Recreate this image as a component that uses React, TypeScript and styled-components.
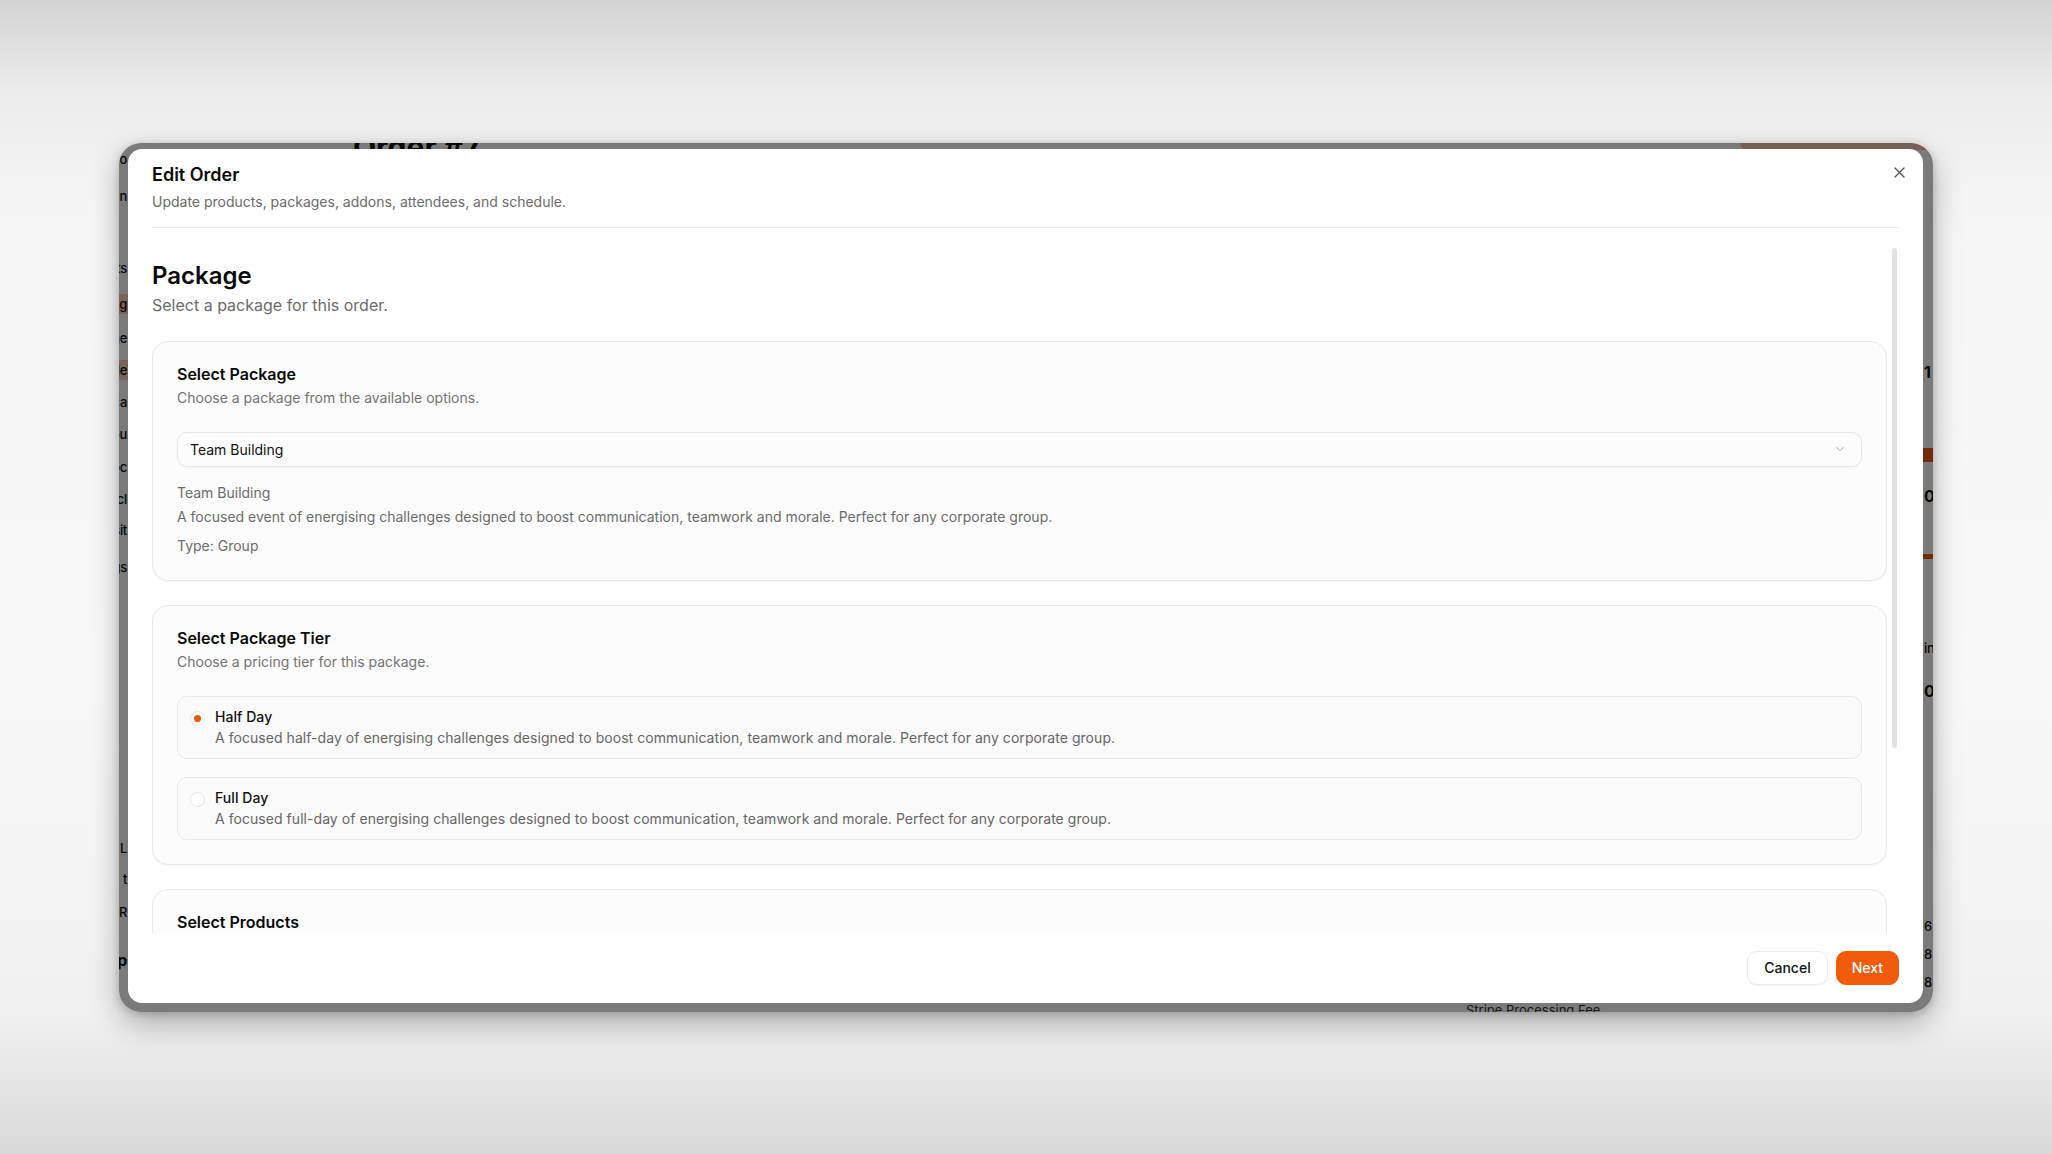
import styled, { createGlobalStyle } from 'styled-components'
import { ChevronDown } from 'lucide-react'

const GlobalStyle = createGlobalStyle`
  * {
    box-sizing: border-box;
  }
  html, body {
    margin: 0;
    padding: 0;
  }
  body {
    font-family: Inter, 'Noto Sans', sans-serif;
    color: #0a0a0a;
    -webkit-font-smoothing: antialiased;
  }
  p {
    margin: 0;
  }
`

const Page = styled.div`
  width: 100vw;
  height: 100vh;
  display: flex;
  align-items: center;
  justify-content: center;
  background:
    linear-gradient(to bottom, #d3d3d3 0%, #ececec 8%, #f6f6f6 20%, #f8f8f8 60%, #f0f0f0 88%, #d9d9d9 100%);
`

const Window = styled.div`
  position: relative;
  width: 1814px;
  height: 869px;
  border-radius: 22px;
  overflow: hidden;
  background: #fff;
  box-shadow: 0 12px 30px rgba(0, 0, 0, 0.28), 0 2px 8px rgba(0, 0, 0, 0.18);
`

/* the app page that sits behind the dialog */
const AppBehind = styled.div`
  height: 100%;
  display: flex;
  flex-direction: column;
  font-size: 14px;
  line-height: 20px;
  color: #111;
`

const AppHeader = styled.div`
  height: 6px;
  display: flex;
  justify-content: space-between;
  align-items: flex-start;
`

const OrderTitle = styled.h1`
  margin: -14px 0 0 234px;
  font-size: 30px;
  line-height: 36px;
  font-weight: 700;
  white-space: nowrap;
`

const EditButton = styled.div`
  width: 193px;
  height: 36px;
  margin-top: -29px;
  background: #fdc9b5;
  border-radius: 8px;
`

const AppBody = styled.div`
  flex: 1;
  display: flex;
`

const Rail = styled.div<{ $side: 'left' | 'right' }>`
  width: ${(p) => (p.$side === 'left' ? '9px' : '10px')};
  overflow: hidden;
  display: flex;
  flex-direction: column;
  align-items: ${(p) => (p.$side === 'left' ? 'flex-end' : 'flex-start')};
`

const RailItem = styled.div<{ $top: number; $hl?: boolean; $bold?: boolean }>`
  flex-shrink: 0;
  margin-top: ${(p) => p.$top}px;
  white-space: nowrap;
  font-weight: ${(p) => (p.$bold ? 700 : 500)};
  font-size: ${(p) => (p.$bold ? '16px' : '13px')};
  letter-spacing: -0.3px;
  background: ${(p) => (p.$hl ? '#fdd2bd' : 'transparent')};
  padding: 0 1px;
`

const RailBar = styled.div<{ $top: number; $h: number }>`
  flex-shrink: 0;
  margin-top: ${(p) => p.$top}px;
  width: 12px;
  height: ${(p) => p.$h}px;
  background: #f25a0c;
`

const AppMain = styled.div`
  flex: 1;
  display: flex;
  flex-direction: column;
  justify-content: flex-end;
`

const FeeLabel = styled.div`
  margin: 0 0 -8px 1338px;
  font-size: 13px;
  color: #333;
`

const Overlay = styled.div`
  position: absolute;
  inset: 0;
  background: rgba(0, 0, 0, 0.52);
`

const Dialog = styled.div`
  position: absolute;
  top: 6px;
  left: 9px;
  right: 10px;
  bottom: 9px;
  background: #fff;
  border-radius: 14px;
  display: flex;
  flex-direction: column;
  overflow: hidden;
`

const DialogHeader = styled.div`
  position: relative;
  margin: 0 24px;
  padding: 17px 0 15px;
  border-bottom: 1px solid #ededed;
`

const DialogTitle = styled.h2`
  margin: 0;
  font-size: 18px;
  line-height: 18px;
  font-weight: 600;
  color: #0a0a0a;
`

const DialogDescription = styled.p`
  margin-top: 8px;
  font-size: 14px;
  line-height: 20px;
  color: #6b6b6b;
`

const CloseButton = styled.button`
  position: absolute;
  top: 14px;
  right: -10px;
  width: 20px;
  height: 20px;
  padding: 0;
  border: none;
  background: transparent;
  display: flex;
  align-items: center;
  justify-content: center;
  color: #555;
  cursor: pointer;
`

const ScrollFrame = styled.div`
  flex: 1;
  min-height: 0;
  margin: 20px 24px 0;
  display: flex;
  gap: 5px;
`

const ScrollArea = styled.div`
  flex: 1;
  min-width: 0;
  overflow-y: auto;
  padding-top: 12px;
  scrollbar-width: none;

  &::-webkit-scrollbar {
    display: none;
  }
`

const ScrollTrack = styled.div`
  width: 7px;
  flex-shrink: 0;
`

const ScrollThumb = styled.div`
  width: 5px;
  height: 500px;
  border-radius: 3px;
  background: #e3e3e3;
`

const SectionTitle = styled.h3`
  margin: 0;
  font-size: 24px;
  line-height: 32px;
  font-weight: 600;
  color: #0a0a0a;
`

const SectionSubtitle = styled.p`
  margin-top: 1px;
  font-size: 16px;
  line-height: 24px;
  color: #6b6b6b;
`

const Card = styled.section`
  margin-top: 24px;
  padding: 20px 24px 24px;
  background: #fcfcfc;
  border: 1px solid #e8e8e8;
  border-radius: 16px;
  box-shadow: 0 1px 2px rgba(0, 0, 0, 0.04);
`

const CardTitle = styled.h4`
  margin: 0;
  font-size: 16px;
  line-height: 24px;
  font-weight: 600;
  color: #0a0a0a;
`

const CardDescription = styled.p`
  margin-top: 2px;
  font-size: 14px;
  line-height: 20px;
  color: #737373;
`

const SelectBox = styled.div`
  margin-top: 24px;
  height: 35px;
  padding: 0 14px 0 12px;
  display: flex;
  align-items: center;
  justify-content: space-between;
  background: #fcfcfc;
  border: 1px solid #e6e6e6;
  border-radius: 10px;
  font-size: 14px;
  color: #111;
  box-shadow: 0 1px 2px rgba(0, 0, 0, 0.03);
`

const Details = styled.div`
  margin-top: 16px;
  display: flex;
  flex-direction: column;
  font-size: 14px;
  line-height: 20px;
  color: #6b6b6b;
`

const DetailLine = styled.p<{ $gap: number }>`
  margin-top: ${(p) => p.$gap}px;
`

const TierList = styled.div`
  margin-top: 24px;
  display: flex;
  flex-direction: column;
  gap: 18px;
`

const TierOption = styled.label`
  display: flex;
  align-items: flex-start;
  gap: 10px;
  padding: 10px 12px 10px;
  background: #fafafa;
  border: 1px solid #e8e8e8;
  border-radius: 10px;
  cursor: pointer;
`

const Radio = styled.span<{ $checked: boolean }>`
  flex-shrink: 0;
  margin-top: 4px;
  width: 15px;
  height: 15px;
  border-radius: 50%;
  border: 1px solid #e4e4e4;
  background: #fff;
  display: flex;
  align-items: center;
  justify-content: center;

  &::after {
    content: '';
    width: 7px;
    height: 7px;
    border-radius: 50%;
    background: ${(p) => (p.$checked ? '#e8590c' : 'transparent')};
  }
`

const TierText = styled.div`
  display: flex;
  flex-direction: column;
  gap: 1px;
  font-size: 14px;
  line-height: 20px;
  letter-spacing: 0.05px;
`

const TierName = styled.span`
  font-weight: 500;
  color: #111;
`

const TierDescription = styled.span`
  color: #666;
`

const ProductList = styled.div`
  margin-top: 24px;
  display: flex;
  flex-direction: column;
  gap: 12px;
`

const ProductRow = styled.div`
  height: 50px;
  padding: 0 14px;
  display: flex;
  align-items: center;
  justify-content: space-between;
  background: #fafafa;
  border: 1px solid #e8e8e8;
  border-radius: 10px;
  font-size: 14px;
  color: #111;
`

const ScrollEnd = styled.div`
  height: 24px;
`

const DialogFooter = styled.div`
  padding: 18px 24px;
  display: flex;
  justify-content: flex-end;
  gap: 8px;
`

const Button = styled.button<{ $primary?: boolean }>`
  height: 34px;
  padding: 0 ${(p) => (p.$primary ? '15px' : '16px')};
  border-radius: 10px;
  font-family: inherit;
  font-size: 14px;
  font-weight: 500;
  cursor: pointer;
  border: 1px solid ${(p) => (p.$primary ? '#f25a0c' : '#ebebeb')};
  background: ${(p) => (p.$primary ? '#f25a0c' : '#fff')};
  color: ${(p) => (p.$primary ? '#fff' : '#111')};
  box-shadow: 0 1px 2px rgba(0, 0, 0, 0.05);
`

const leftRail = [
  { t: 'o', top: 0 },
  { t: 'n', top: 17 },
  { t: 'ts', top: 52 },
  { t: 'ng', top: 16, hl: true },
  { t: 'he', top: 14 },
  { t: 'de', top: 12, hl: true },
  { t: 'ca', top: 12 },
  { t: 'ou', top: 12 },
  { t: 'oc', top: 13 },
  { t: 'cl', top: 12 },
  { t: 'sit', top: 11 },
  { t: 'gs', top: 17 },
  { t: 'L', top: 261 },
  { t: 't', top: 11 },
  { t: 'R', top: 13 },
  { t: 'Up', top: 28, bold: true },
]

const tiers = [
  {
    name: 'Half Day',
    text: 'A focused half-day of energising challenges designed to boost communication, teamwork and morale. Perfect for any corporate group.',
    checked: true,
  },
  {
    name: 'Full Day',
    text: 'A focused full-day of energising challenges designed to boost communication, teamwork and morale. Perfect for any corporate group.',
    checked: false,
  },
]

const products = ['Lunch Catering', 'Team Photos', 'Trophy & Awards']

function App() {
  return (
    <>
      <GlobalStyle />
      <Page>
        <Window>
          <AppBehind>
            <AppHeader>
              <OrderTitle>Order #7</OrderTitle>
              <EditButton />
            </AppHeader>
            <AppBody>
              <Rail $side='left'>
                {leftRail.map((r, i) => (
                  <RailItem key={i} $top={r.top} $hl={r.hl} $bold={r.bold}>
                    {r.t}
                  </RailItem>
                ))}
              </Rail>
              <AppMain>
                <FeeLabel>Stripe Processing Fee</FeeLabel>
              </AppMain>
              <Rail $side='right'>
                <RailItem $top={213} $bold>1</RailItem>
                <RailBar $top={66} $h={14} />
                <RailItem $top={24} $bold>0.</RailItem>
                <RailBar $top={48} $h={5} />
                <RailItem $top={79}>in</RailItem>
                <RailItem $top={23} $bold>0.</RailItem>
                <RailItem $top={215}>6</RailItem>
                <RailItem $top={8}>8</RailItem>
                <RailItem $top={8}>8</RailItem>
              </Rail>
            </AppBody>
          </AppBehind>
          <Overlay />
          <Dialog role='dialog'>
            <DialogHeader>
              <DialogTitle>Edit Order</DialogTitle>
              <DialogDescription>Update products, packages, addons, attendees, and schedule.</DialogDescription>
              <CloseButton aria-label='Close'>
                <svg width='11' height='11' viewBox='0 0 11 11' fill='none' stroke='currentColor' strokeWidth='1.4' strokeLinecap='round'>
                  <path d='M1 1l9 9M10 1l-9 9' />
                </svg>
              </CloseButton>
            </DialogHeader>
            <ScrollFrame>
              <ScrollArea>
                <SectionTitle>Package</SectionTitle>
                <SectionSubtitle>Select a package for this order.</SectionSubtitle>

                <Card>
                  <CardTitle>Select Package</CardTitle>
                  <CardDescription>Choose a package from the available options.</CardDescription>
                  <SelectBox>
                    <span>Team Building</span>
                    <ChevronDown size={14} color='#a8a8a8' strokeWidth={1.6} />
                  </SelectBox>
                  <Details>
                    <DetailLine $gap={0}>Team Building</DetailLine>
                    <DetailLine $gap={4}>
                      A focused event of energising challenges designed to boost communication, teamwork and morale.
                      Perfect for any corporate group.
                    </DetailLine>
                    <DetailLine $gap={9}>Type: Group</DetailLine>
                  </Details>
                </Card>

                <Card>
                  <CardTitle>Select Package Tier</CardTitle>
                  <CardDescription>Choose a pricing tier for this package.</CardDescription>
                  <TierList>
                    {tiers.map((tier) => (
                      <TierOption key={tier.name}>
                        <Radio $checked={tier.checked} />
                        <TierText>
                          <TierName>{tier.name}</TierName>
                          <TierDescription>{tier.text}</TierDescription>
                        </TierText>
                      </TierOption>
                    ))}
                  </TierList>
                </Card>

                <Card>
                  <CardTitle>Select Products</CardTitle>
                  <CardDescription>Choose the products to include with this order.</CardDescription>
                  <ProductList>
                    {products.map((p) => (
                      <ProductRow key={p}>
                        <span>{p}</span>
                      </ProductRow>
                    ))}
                  </ProductList>
                </Card>
                <ScrollEnd />
              </ScrollArea>
              <ScrollTrack>
                <ScrollThumb />
              </ScrollTrack>
            </ScrollFrame>
            <DialogFooter>
              <Button>Cancel</Button>
              <Button $primary>Next</Button>
            </DialogFooter>
          </Dialog>
        </Window>
      </Page>
    </>
  )
}

export default App
